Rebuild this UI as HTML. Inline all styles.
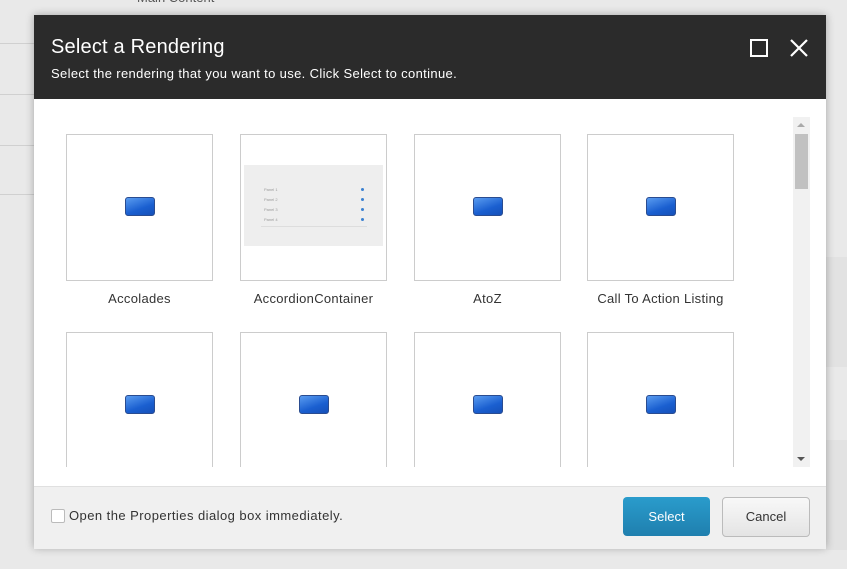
<!DOCTYPE html>
<html><head><style>
body{margin:0;width:847px;height:569px;background:#e9e9e9;position:relative;overflow:hidden;font-family:"Liberation Sans",sans-serif}
.abs{position:absolute}
.dlg{left:34px;top:15px;width:792px;height:533px;background:#fff;box-shadow:0 0 8px rgba(0,0,0,.3)}
.hd{left:0;top:0;width:792px;height:84px;background:#2b2b2b;color:#fff}
.tile{position:absolute;width:145px;height:145px;border:1px solid #ccc;background:#fff}
.ic{position:absolute;left:58px;top:62px;width:30px;height:19px;border-radius:3px;background:linear-gradient(160deg,#5a9cf0,#1a5fd0 60%,#1650b8);border:1px solid #2a4c90;box-sizing:border-box}
.lb{position:absolute;width:147px;text-align:center;font-size:13px;color:#333;letter-spacing:.3px}
</style></head><body>
<div class="abs" style="left:137px;top:-10px;font-size:13px;color:#555">Main Content</div>
<div class="abs" style="left:0;top:43px;width:34px;height:1px;background:#d0d0d0"></div>
<div class="abs" style="left:0;top:94px;width:34px;height:1px;background:#d0d0d0"></div>
<div class="abs" style="left:0;top:145px;width:34px;height:1px;background:#d0d0d0"></div>
<div class="abs" style="left:0;top:194px;width:34px;height:1px;background:#d0d0d0"></div>
<div class="abs" style="left:826px;top:257px;width:21px;height:110px;background:#e2e2e2"></div>
<div class="abs" style="left:826px;top:440px;width:21px;height:110px;background:#e2e2e2"></div>
<div class="abs dlg">
 <div class="abs hd">
  <div class="abs" style="left:17px;top:21px;font-size:20px;letter-spacing:.2px">Select a Rendering</div>
  <div class="abs" style="left:17px;top:51px;font-size:13px;letter-spacing:.35px">Select the rendering that you want to use. Click Select to continue.</div>
  <div class="abs" style="left:716px;top:24px;width:14px;height:14px;border:2px solid #fff"></div>
  <svg class="abs" style="left:756px;top:24px" width="18" height="18"><path d="M1 1L17 17M17 1L1 17" stroke="#fff" stroke-width="2.2"/></svg>
 </div>
 <div class="abs" style="left:0;top:84px;width:792px;height:368px;overflow:hidden">
  <div class="tile" style="left:32px;top:35px"><div class="ic"></div></div>
  <div class="tile" style="left:206px;top:35px">
   <div class="abs" style="left:3px;top:30px;width:139px;height:81px;background:#eee">
    <div class="abs" style="left:17px;top:20px;width:106px;height:41px;border-bottom:1px solid #ddd;font-size:4px;color:#999">
     <div style="height:10px;line-height:10px;padding-left:3px">Panel 1</div><div style="height:10px;line-height:10px;padding-left:3px">Panel 2</div><div style="height:10px;line-height:10px;padding-left:3px">Panel 3</div><div style="height:10px;line-height:10px;padding-left:3px">Panel 4</div>
     <div class="abs" style="left:100px;top:3px;width:3px;height:3px;border-radius:50%;background:#3a80d0;box-shadow:0 10px #3a80d0,0 20px #3a80d0,0 30px #3a80d0"></div>
    </div>
   </div>
  </div>
  <div class="tile" style="left:380px;top:35px"><div class="ic"></div></div>
  <div class="tile" style="left:553px;top:35px"><div class="ic"></div></div>
  <div class="lb" style="left:32px;top:192px">Accolades</div>
  <div class="lb" style="left:206px;top:192px">AccordionContainer</div>
  <div class="lb" style="left:380px;top:192px">AtoZ</div>
  <div class="lb" style="left:553px;top:192px">Call To Action Listing</div>
  <div class="tile" style="left:32px;top:233px"><div class="ic"></div></div>
  <div class="tile" style="left:206px;top:233px"><div class="ic"></div></div>
  <div class="tile" style="left:380px;top:233px"><div class="ic"></div></div>
  <div class="tile" style="left:553px;top:233px"><div class="ic"></div></div>
  <div class="abs" style="left:759px;top:18px;width:17px;height:350px;background:#f1f1f1">
   <div class="abs" style="left:4px;top:6px;width:0;height:0;border-left:4px solid transparent;border-right:4px solid transparent;border-bottom:4px solid #aaa"></div>
   <div class="abs" style="left:2px;top:17px;width:13px;height:55px;background:#c1c1c1"></div>
   <div class="abs" style="left:4px;top:340px;width:0;height:0;border-left:4px solid transparent;border-right:4px solid transparent;border-top:4px solid #555"></div>
  </div>
 </div>
 <div class="abs" style="left:0;top:471px;width:792px;height:62px;background:#f0f0f0;border-top:1px solid #e0e0e0">
  <div class="abs" style="left:17px;top:22px;width:12px;height:12px;border:1px solid #bbb;background:#fff;border-radius:2px"></div>
  <div class="abs" style="left:35px;top:21px;font-size:13px;color:#333;letter-spacing:.45px">Open the Properties dialog box immediately.</div>
  <div class="abs" style="left:589px;top:10px;width:87px;height:39px;border-radius:4px;background:linear-gradient(#2a9ccc,#1f7fae);color:#fff;font-size:13px;text-align:center;line-height:39px">Select</div>
  <div class="abs" style="left:688px;top:10px;width:86px;height:38px;border-radius:4px;border:1px solid #bbb;background:linear-gradient(#f8f8f8,#e4e4e4);color:#333;font-size:13px;text-align:center;line-height:38px">Cancel</div>
 </div>
</div>
</body></html>
